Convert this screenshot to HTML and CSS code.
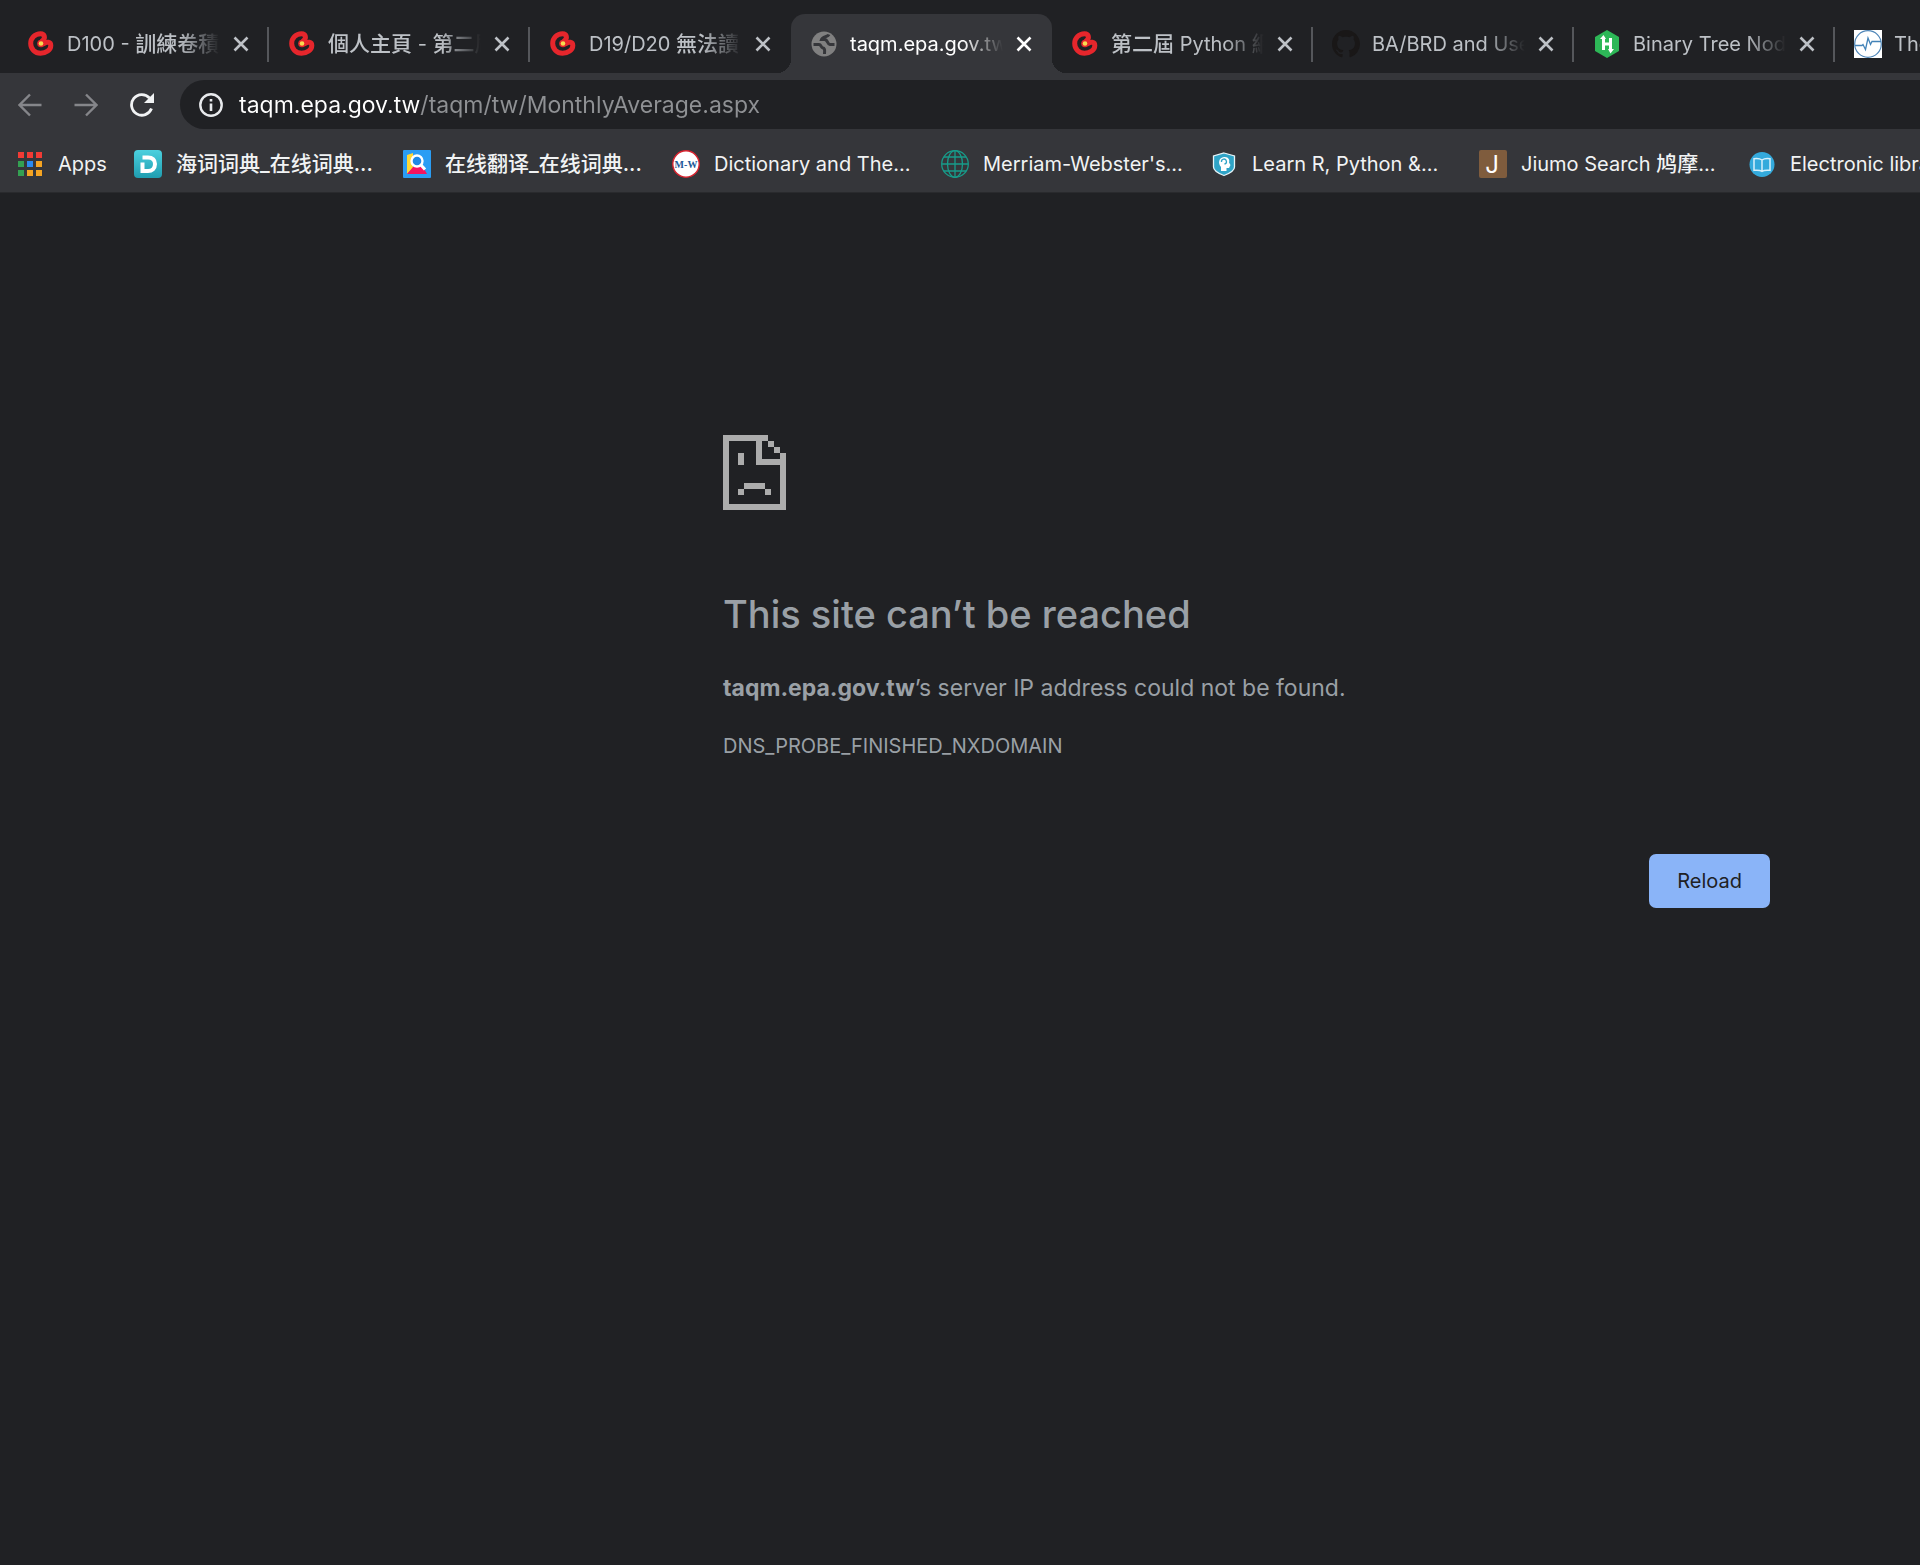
FILE: index.html
```
<!DOCTYPE html>
<html lang="en">
<head>
    <meta charset="UTF-8">
    <title>taqm.epa.gov.tw</title>

    <link rel="stylesheet" href="styles.css">
</head>
<body>
    <!-- shared shapes -->
    <svg class="defs" aria-hidden="true">
        <symbol id="cupoy" viewBox="0 0 28 28">
            <circle cx="14" cy="13.500" r="3.800" fill="#e6262c"/>
            <path d="M15.500 10.500C18.500 8.500 18 3.700 13.500 3.700C8 3.700 3.700 8 3.700 13.500C3.700 19 8 23.300 13.500 23.300C19 23.300 23.800 20 23.800 15.500C23.800 11.500 19.500 11.500 17 13.500" fill="none" stroke="#e6262c" stroke-width="5" stroke-linecap="round"/>
            <circle cx="14" cy="13.500" r="2.300" fill="#f8dc50"/>
        </symbol>
        <symbol id="close" viewBox="0 0 16 16">
            <path d="M1.500 1.500L14.500 14.500M14.500 1.500L1.500 14.500" fill="none" stroke="currentColor" stroke-width="2.600"/>
        </symbol>
    </svg>

    <header>
        <nav id="tabs">
            <div class="tab">
                <svg class="icon"><use href="#cupoy"/></svg>
                <span class="title">D100 - <span lang="zh-TW">訓練卷積</span></span>
                <button class="close" aria-label="Close tab"><svg><use href="#close"/></svg></button>
            </div>
            <div class="tab">
                <svg class="icon"><use href="#cupoy"/></svg>
                <span class="title"><span lang="zh-TW">個人主頁</span> - <span lang="zh-TW">第二屆</span></span>
                <button class="close" aria-label="Close tab"><svg><use href="#close"/></svg></button>
            </div>
            <div class="tab">
                <svg class="icon"><use href="#cupoy"/></svg>
                <span class="title">D19/D20 <span lang="zh-TW">無法讀</span></span>
                <button class="close" aria-label="Close tab"><svg><use href="#close"/></svg></button>
            </div>
            <div class="tab active">
                <svg class="icon" viewBox="0 0 28 28">
                    <circle cx="14" cy="14" r="12.500" fill="#808080"/>
                    <path d="M3.500 14.500H9C11.500 14.500 10.500 17.500 13 18C15.500 18.500 14.500 21 14.500 24M19 4.500C18 7 12.500 6.500 11.500 9.500H14.500C18 9.500 17 14 20 14.500H24.500" fill="none" stroke="#35363a" stroke-width="3"/>
                </svg>
                <span class="title">taqm.epa.gov.tw</span>
                <button class="close" aria-label="Close tab"><svg><use href="#close"/></svg></button>
            </div>
            <div class="tab">
                <svg class="icon"><use href="#cupoy"/></svg>
                <span class="title"><span lang="zh-TW">第二屆</span> Python <span lang="zh-TW">網</span></span>
                <button class="close" aria-label="Close tab"><svg><use href="#close"/></svg></button>
            </div>
            <div class="tab">
                <svg class="icon" viewBox="0 0 16 16">
                    <path fill="#191717" d="M8 0C3.580 0 0 3.580 0 8c0 3.540 2.290 6.530 5.470 7.590.4.070.55-.17.55-.38 0-.19-.01-.82-.01-1.490-2.010.37-2.530-.49-2.690-.94-.09-.23-.48-.94-.82-1.130-.28-.15-.68-.52-.01-.53.63-.01 1.080.58 1.230.82.72 1.210 1.870.87 2.330.66.07-.52.28-.87.51-1.070-1.780-.2-3.640-.89-3.640-3.950 0-.87.31-1.590.82-2.150-.08-.2-.36-1.020.08-2.120 0 0 .67-.21 2.200.82.64-.18 1.320-.27 2-.27s1.360.09 2 .27c1.530-1.040 2.200-.82 2.200-.82.44 1.100.16 1.920.08 2.120.51.56.82 1.270.82 2.150 0 3.070-1.870 3.750-3.650 3.950.29.25.54.73.54 1.480 0 1.070-.01 1.930-.01 2.200 0 .21.15.46.55.38A8.010 8.010 0 0 0 16 8c0-4.420-3.580-8-8-8z"/>
                </svg>
                <span class="title">BA/BRD and Use</span>
                <button class="close" aria-label="Close tab"><svg><use href="#close"/></svg></button>
            </div>
            <div class="tab">
                <svg class="icon" viewBox="0 0 28 28">
                    <path d="M14 0L26 7V21L14 28L2 21V7Z" fill="#2db757"/>
                    <path d="M10.500 7V20M17.500 8V21M10.500 14H17.500" fill="none" stroke="#fff" stroke-width="3"/>
                    <path d="M7 9L10.500 5L13 9ZM15 19L17.500 23.500L21 19Z" fill="#fff"/>
                </svg>
                <span class="title">Binary Tree Nodes</span>
                <button class="close" aria-label="Close tab"><svg><use href="#close"/></svg></button>
            </div>
            <div class="tab">
                <svg class="icon" viewBox="0 0 28 28">
                    <rect width="28" height="28" fill="#fff"/>
                    <circle cx="14" cy="14" r="13.300" fill="none" stroke="#4f86b8" stroke-width="1.200"/>
                    <path d="M1 15.500H8L9 14.500L11.500 19.500L14 8L16.500 14.500L18 11.500H27" fill="none" stroke="#4383b8" stroke-width="1.300"/>
                </svg>
                <span class="title">The</span>
                <button class="close" aria-label="Close tab"><svg><use href="#close"/></svg></button>
            </div>
        </nav>

        <div id="toolbar">
            <button class="nav" aria-label="Back" disabled>
                <svg viewBox="0 0 24 24"><path d="M23.500 12H2M12 1.500L1.500 12L12 22.500" fill="none" stroke="currentColor" stroke-width="2.400"/></svg>
            </button>
            <button class="nav" aria-label="Forward" disabled>
                <svg viewBox="0 0 24 24"><path d="M.5 12H22M12 1.500L22.500 12L12 22.500" fill="none" stroke="currentColor" stroke-width="2.400"/></svg>
            </button>
            <button class="nav" aria-label="Reload this page">
                <svg viewBox="0 0 24 24"><path d="M21.500 15.500A10.300 10.300 0 1 1 19.500 5" fill="none" stroke="currentColor" stroke-width="2.800"/><path d="M24 0V10H14Z" fill="currentColor"/></svg>
            </button>
            <form id="omnibox">
                <svg viewBox="0 0 24 24">
                    <circle cx="12" cy="12" r="10.700" fill="none" stroke="currentColor" stroke-width="2.400"/>
                    <path d="M12 10.500V18M12 6V8.500" stroke="currentColor" stroke-width="2.600"/>
                </svg>
                <input type="text" id="url" aria-label="Address" value="taqm.epa.gov.tw/taqm/tw/MonthlyAverage.aspx">
            </form>
        </div>

        <nav id="bookmarks">
            <a class="apps" href="#">
                <svg class="icon" viewBox="0 0 28 28">
                    <path d="M2 2h6v6h-6zM11 2h6v6h-6zM20 2h6v6h-6z" fill="#f23b35"/>
                    <path d="M2 11h6v6h-6zM2 20h6v6h-6z" fill="#34a052"/>
                    <path d="M11 11h6v6h-6z" fill="#2b8af0"/>
                    <path d="M20 11h6v6h-6zM11 20h6v6h-6zM20 20h6v6h-6z" fill="#f5a422"/>
                </svg>
                <span>Apps</span>
            </a>
            <a href="#">
                <svg class="icon" viewBox="0 0 28 28">
                    <defs>
                        <linearGradient id="teal" x1="0" y1="0" x2="0" y2="1">
                            <stop offset="0" stop-color="#4bd0de"/>
                            <stop offset="1" stop-color="#1f9db0"/>
                        </linearGradient>
                    </defs>
                    <rect width="28" height="28" rx="4" fill="url(#teal)"/>
                    <path d="M8.500 7.500H14C18.500 7.500 21 10 21 14C21 18.500 18 21 14 21H8.500V12.500" fill="none" stroke="#fff" stroke-width="4"/>
                </svg>
                <span lang="zh-CN">海词词典_在线词典...</span>
            </a>
            <a href="#">
                <svg class="icon" viewBox="0 0 28 28">
                    <rect width="28" height="28" rx="1" fill="#2a9df4"/>
                    <path d="M4 5L10 3V18L4 24Z" fill="#fdd835"/>
                    <path d="M4 24L10 17H20L24 24Z" fill="#f5145f"/>
                    <circle cx="14" cy="11" r="5.500" fill="#1e88e5" stroke="#fff" stroke-width="2.400"/>
                    <path d="M18 15L22 19.500" stroke="#fff" stroke-width="3"/>
                </svg>
                <span lang="zh-CN">在线翻译_在线词典...</span>
            </a>
            <a href="#">
                <svg class="icon" viewBox="0 0 28 28">
                    <circle cx="14" cy="14" r="13.200" fill="#fff" stroke="#d8232f" stroke-width="1.400"/>
                    <text class="mw" x="14" y="18" text-anchor="middle">M-W</text>
                </svg>
                <span>Dictionary and The...</span>
            </a>
            <a href="#">
                <svg class="icon" viewBox="0 0 28 28">
                    <g fill="none" stroke="#179c8a" stroke-width="1.300">
                        <circle cx="14" cy="14" r="13.300"/>
                        <ellipse cx="14" cy="14" rx="7.500" ry="13.300"/>
                        <path d="M14 1V27M1 14H27M3 7H25M3 21H25"/>
                    </g>
                </svg>
                <span>Merriam-Webster's...</span>
            </a>
            <a href="#">
                <svg class="icon" viewBox="0 0 28 28">
                    <path d="M14 3L24.500 6V17C24.500 21 18 24 14 25.500C10 24 3.500 21 3.500 17V6Z" fill="#2fa4c7" stroke="#e6f4f8" stroke-width="1.300"/>
                    <path d="M11 21V17C7.500 13 9 7.500 14 7C18.500 6.500 20 10 19 12.500L20.500 15L19 18H16.500V21Z" fill="#fff"/>
                    <path d="M11.500 12A2.500 2.500 0 1 1 14.500 14" fill="none" stroke="#2fa4c7" stroke-width="1.300"/>
                </svg>
                <span>Learn R, Python &amp;...</span>
            </a>
            <a href="#">
                <svg class="icon" viewBox="0 0 28 28">
                    <rect width="28" height="28" rx="2" fill="#7f5c3d"/>
                    <text class="jiumo" x="13" y="23" text-anchor="middle">J</text>
                </svg>
                <span>Jiumo Search <span lang="zh-CN">鸠摩</span>...</span>
            </a>
            <a href="#">
                <svg class="icon" viewBox="0 0 28 28">
                    <circle cx="14" cy="14.500" r="12.500" fill="#34aadc"/>
                    <path d="M14 10C12 8.500 9 8.300 6 8.700V20.300C9 20 12 20 14 21.300C16 20 19 20 22 20.300V8.700C19 8.300 16 8.500 14 10V21" fill="none" stroke="#d6f0fb" stroke-width="1.500"/>
                </svg>
                <span>Electronic library</span>
            </a>
        </nav>
    </header>

    <main>
        <svg class="sad" viewBox="0 0 21 25" shape-rendering="crispEdges">
            <path d="M0 0H15V2H2V23H19V10H11V2H13V8H19V6H21V25H0ZM15 2H17V4H15ZM17 4H19V6H17ZM5 6H7V10H5ZM7 16H14V18H7ZM5 18H7V20H5ZM14 18H16V20H14Z"/>
        </svg>
        <h1>This site can’t be reached</h1>
        <p><strong>taqm.epa.gov.tw</strong>’s server IP address could not be found.</p>
        <div class="code">DNS_PROBE_FINISHED_NXDOMAIN</div>
        <div class="actions">
            <button id="reload">Reload</button>
        </div>
    </main>

    <script>
        document.getElementById('reload').addEventListener('click', () => location.reload());
    </script>
</body>
</html>
```

FILE: styles.css
```
html, body {
    margin: 0;
}

body {
    background-color: #202124;
    font-family: Inter, 'Noto Sans CJK TC', sans-serif;
    font-size: 20px;
    color: #9aa0a6;
    overflow-x: hidden;
}

:lang(zh) {
    font-size: 21px;
    font-weight: 500;
}

:lang(zh-CN) {
    font-family: Inter, 'Noto Sans CJK SC', sans-serif;
}

button {
    background: none;
    border: none;
    padding: 0;
    color: inherit;
    font: inherit;
}

svg {
    display: block;
    flex-shrink: 0;
}

.defs {
    position: absolute;
    width: 0;
    height: 0;
}

.icon {
    width: 28px;
    height: 28px;
}

/* tab strip */
#tabs {
    display: flex;
    overflow: hidden;
    padding: 14px 0 0 8px;
}

.tab {
    flex: 0 0 261px;
    min-width: 0;
    box-sizing: border-box;
    height: 59px;
    padding: 0 20px 0 19px;
    display: flex;
    align-items: center;
    position: relative;
    color: #bdc1c6;
}

.title {
    flex: 1;
    min-width: 0;
    margin: 0 13px 0 12px;
    line-height: 28px;
    overflow: hidden;
    white-space: nowrap;
    -webkit-mask-image: linear-gradient(to left, transparent, #000 40px);
    mask-image: linear-gradient(to left, transparent, #000 40px);
}

.close svg {
    width: 16px;
    height: 16px;
}

/* separator between two inactive tabs */
.tab:not(.active)::after {
    content: '';
    position: absolute;
    right: 0;
    top: 13px;
    width: 2px;
    height: 35px;
    background: #55575b;
}

.tab:has(+ .active)::after {
    display: none;
}

.tab.active {
    background: #35363a;
    border-radius: 14px 14px 0 0;
    color: #fff;
}

/* the feet of the active tab */
.tab.active::before, .tab.active::after {
    content: '';
    position: absolute;
    bottom: 0;
    width: 14px;
    height: 14px;
}

.tab.active::before {
    right: 100%;
    background: radial-gradient(circle at 0 0, transparent 14px, #35363a 14px);
}

.tab.active::after {
    left: 100%;
    background: radial-gradient(circle at 100% 0, transparent 14px, #35363a 14px);
}

/* toolbar */
#toolbar {
    display: flex;
    align-items: center;
    gap: 32px;
    padding: 7px 0 7px 18px;
    background: #35363a;
}

.nav {
    color: #f1f3f4;
}

.nav:disabled {
    color: #85868a;
}

.nav svg, #omnibox svg {
    width: 24px;
    height: 24px;
}

#omnibox {
    flex: 1;
    display: flex;
    align-items: center;
    gap: 16px;
    height: 49px;
    margin-left: -6px;
    padding-left: 19px;
    border-radius: 25px 0 0 25px;
    background: #202124;
    color: #e8eaed;
}

#url {
    flex: 1;
    padding: 0;
    border: none;
    outline: none;
    font: inherit;
    font-size: 23px;
    line-height: 32px;
    /* host name is brighter than the path */
    color: transparent;
    background: linear-gradient(to right, #fff 182px, #8f9194 182px);
    -webkit-background-clip: text;
    background-clip: text;
}

/* bookmarks */
#bookmarks {
    display: flex;
    overflow: hidden;
    height: 55px;
    padding: 0 0 1px 16px;
    background: #35363a;
    border-bottom: 1px solid #292a2d;
}

#bookmarks a {
    flex: 0 0 269px;
    min-width: 0;
    display: flex;
    align-items: center;
    gap: 14px;
    color: #f1f3f4;
    line-height: 28px;
    text-decoration: none;
    white-space: nowrap;
}

#bookmarks .apps {
    flex-basis: 118px;
}

.mw {
    font: bold 10px 'Liberation Serif', serif;
    fill: #1d5a99;
}

.jiumo {
    font: 24px Inter, sans-serif;
    fill: #fff;
}

/* error page */
main {
    max-width: 1047px;
    padding: 241px 0 0 723px;
}

.sad {
    width: 63px;
    height: 76px;
    fill: #acacac;
}

h1 {
    margin: 78px 0 0;
    font-size: 38px;
    font-weight: 500;
    line-height: 52px;
}

p {
    margin: 30px 0 0;
    font-size: 23px;
    line-height: 36px;
}

.code {
    margin-top: 26px;
    line-height: 28px;
}

.actions {
    display: flex;
    justify-content: flex-end;
    margin-top: 94px;
}

#reload {
    padding: 13px 28px;
    border-radius: 7px;
    background: #8ab4f8;
    color: #202124;
    line-height: 28px;
}
```
